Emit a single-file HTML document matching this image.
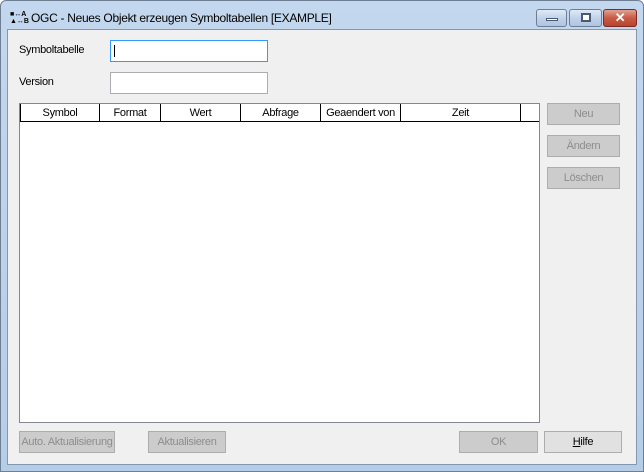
<!DOCTYPE html>
<html><head><style>
*{box-sizing:border-box;margin:0;padding:0}
body{width:644px;height:472px;overflow:hidden;font-family:"Liberation Sans",sans-serif;font-size:11px;letter-spacing:-0.3px;color:#000;background:#fff}
.win{position:absolute;left:0;top:0;width:644px;height:472px;background:linear-gradient(#c3d7ee,#b6cde8);border:1px solid #6e7f94;border-radius:6px 6px 0 0}
.title{position:absolute;left:30px;top:10px;font-size:12px;color:#000;white-space:nowrap}
.client{position:absolute;left:7px;top:29px;width:630px;height:436px;background:#f0f0f0;border:1px solid #8397af}
.a{position:absolute;white-space:nowrap}
.tb{position:absolute;top:8px;height:18px;border:1px solid #6d7e92;border-radius:3px;background:linear-gradient(#dfe9f6,#c1d3ea 50%,#aec4e0)}
.inp{position:absolute;left:110px;width:158px;height:22px;background:#fff;border:1px solid #abadb3}
.btn{position:absolute;height:22px;border:1px solid #adadad;background:#cccccc;color:#8d8d8d;text-align:center;line-height:20px;font-size:11px;white-space:nowrap}
.tab{position:absolute;left:19px;top:103px;width:521px;height:320px;background:#fff;border:1px solid #828790}
.hd{position:absolute;top:0;height:18px;border-right:1px solid #000;border-bottom:1px solid #000;text-align:center;line-height:18px;background:#fff;white-space:nowrap}
</style></head><body>
<div class="win">
<div class="a" style="left:9px;top:10px;font-size:7px;line-height:7px;font-weight:bold;letter-spacing:0">■↔A<br>▲↔B</div>
<div class="title">OGC - Neues Objekt erzeugen Symboltabellen [EXAMPLE]</div>
<div class="tb" style="left:535px;width:31px"><div class="a" style="left:9px;top:8px;width:12px;height:3px;background:#fff;border:1px solid #4a5a70"></div></div>
<div class="tb" style="left:568px;width:33px"><div class="a" style="left:11px;top:3px;width:10px;height:9px;border:2px solid #4a5a70;background:#fff"></div></div>
<div class="tb" style="left:602px;width:34px;border-color:#7a2a22;background:linear-gradient(#e0a292,#c95a44 50%,#b94330)"><div class="a" style="left:0;top:0;width:32px;text-align:center;color:#fff;font-weight:bold;font-size:13px;line-height:16px">✕</div></div>
</div>
<div class="client"></div>
<div class="a" style="left:19px;top:44px">Symboltabelle</div>
<div class="inp" style="top:40px;border-color:#3399ff"><div class="a" style="left:3px;top:4px;width:1px;height:12px;background:#000"></div></div>
<div class="a" style="left:19px;top:76px">Version</div>
<div class="inp" style="top:72px"></div>
<div class="tab">
<div class="hd" style="left:0;width:80px;border-left:1px solid #000">Symbol</div>
<div class="hd" style="left:80px;width:61px">Format</div>
<div class="hd" style="left:141px;width:80px">Wert</div>
<div class="hd" style="left:221px;width:80px">Abfrage</div>
<div class="hd" style="left:301px;width:80px">Geaendert von</div>
<div class="hd" style="left:381px;width:120px">Zeit</div>
<div class="hd" style="left:501px;width:18px;border-right:none"></div>
</div>
<div class="btn" style="left:547px;top:103px;width:73px">Neu</div>
<div class="btn" style="left:547px;top:135px;width:73px">Ändern</div>
<div class="btn" style="left:547px;top:167px;width:73px">Löschen</div>
<div class="btn" style="left:19px;top:431px;width:96px">Auto. Aktualisierung</div>
<div class="btn" style="left:148px;top:431px;width:78px">Aktualisieren</div>
<div class="btn" style="left:459px;top:431px;width:79px">OK</div>
<div class="btn" style="left:544px;top:431px;width:78px;background:#e1e1e1;color:#000"><u>H</u>ilfe</div>
</body></html>
